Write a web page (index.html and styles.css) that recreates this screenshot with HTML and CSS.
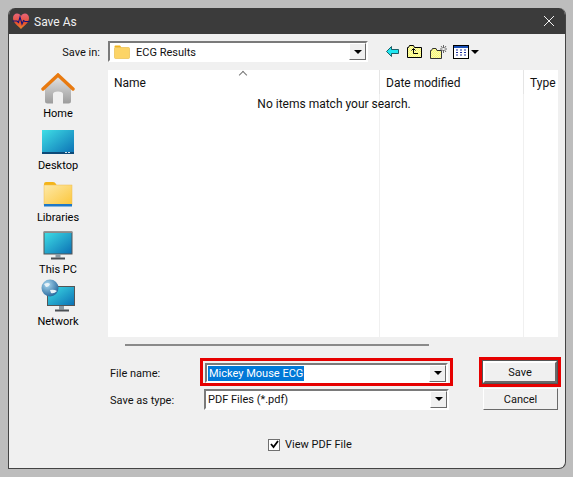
FILE: index.html
```html
<!DOCTYPE html>
<html lang="en">
<head>
    <meta charset="UTF-8">
    <title>Save As</title>
    <link rel="stylesheet" href="styles.css">
</head>
<body>
    <div class="window">
        <div class="titlebar">
            <svg class="app-icon" width="18" height="18" viewBox="0 0 18 18">
                <defs>
                    <linearGradient id="heart" x1="0" y1="0" x2="0" y2="1">
                        <stop offset="0" stop-color="#e8647a"/>
                        <stop offset="0.6" stop-color="#e4502f"/>
                        <stop offset="1" stop-color="#f08a2c"/>
                    </linearGradient>
                </defs>
                <path d="M9 17 C5 13 1 10.500 1 6 C1 3 3 1.500 5 1.500 C7 1.500 8.200 2.500 9 4 C9.800 2.500 11 1.500 13 1.500 C15 1.500 17 3 17 6 C17 10.500 13 13 9 17 Z" fill="url(#heart)"/>
                <path d="M0.500 9 H5 L6.500 10.500 L8 5 L10 12 L11.500 8.500 L13 9.500 H17.500" fill="none" stroke="#14147a" stroke-width="1.100"/>
            </svg>
            <span class="title">Save As</span>
            <svg class="close" width="12" height="12" viewBox="0 0 12 12">
                <path d="M1 1 L11 11 M11 1 L1 11" stroke="#f2f2f2" stroke-width="1"/>
            </svg>
        </div>

        <div class="body">
            <div class="toolbar-row">
                <span class="save-in">Save in:</span>
                <div class="combo combo-folder">
                    <svg width="16" height="14" viewBox="0 0 16 14">
                        <path d="M0.500 1.500 Q0.500 0.500 1.500 0.500 H6 L7.500 2.500 H0.500 Z" fill="#f2b41b"/>
                        <rect x="0.500" y="2.500" width="15" height="11" rx="1" fill="#fcd467" stroke="#e8b840" stroke-width="0.600"/>
                    </svg>
                    <span class="combo-text">ECG Results</span>
                    <span class="combo-btn"><i class="arrow"></i></span>
                </div>
                <div class="tools">
                    <svg width="13" height="11" viewBox="0 0 13 11">
                        <path d="M0.500 5.500 L5.500 0.500 V3.500 H12.500 V7.500 H5.500 V10.500 Z" fill="#1fe6f0" stroke="#003c46" stroke-width="0.800"/>
                    </svg>
                    <svg width="15" height="13" viewBox="0 0 15 13">
                        <defs>
                            <pattern id="dither" width="2" height="2" patternUnits="userSpaceOnUse">
                                <rect width="2" height="2" fill="#ffff66"/>
                                <rect width="1" height="1" fill="#f4f4c0"/>
                                <rect x="1" y="1" width="1" height="1" fill="#f4f4c0"/>
                            </pattern>
                        </defs>
                        <path d="M0.500 12.500 V2.500 H1.500 L2.500 0.500 H6.500 L7.500 2.500 H14.500 V12.500 Z" fill="url(#dither)" stroke="#000"/>
                        <path d="M4.500 5.500 L6.500 3.500 L8.500 5.500 M6.500 4 V8.500 H11" fill="none" stroke="#000"/>
                    </svg>
                    <svg width="17" height="14" viewBox="0 0 17 14">
                        <path d="M0.500 13.500 V5.500 H1.500 L2.500 3.500 H6 L7 5.500 H11.500 V13.500 Z" fill="url(#dither)" stroke="#333"/>
                        <path d="M13.500 0 V3 M13.500 5 V8 M10 4 H12.500 M14.500 4 H17 M11 1 L12.500 3 M16 1 L14.500 3 M11 7 L12.500 5 M16 7 L14.500 5" stroke="#444" stroke-width="0.800"/>
                    </svg>
                    <span class="views">
                        <svg width="16" height="14" viewBox="0 0 16 14">
                            <rect x="0.500" y="0.500" width="15" height="13" fill="#fff" stroke="#000"/>
                            <rect x="1" y="1" width="14" height="2" fill="#1a50b8"/>
                            <path d="M3 5 H5 M7 5 H9 M11 5 H13 M3 7.500 H5 M7 7.500 H9 M11 7.500 H13 M3 10 H5 M7 10 H9 M11 10 H13" stroke="#1c2ea0" stroke-width="1.200"/>
                        </svg>
                        <i class="arrow"></i>
                    </span>
                </div>
            </div>

            <div class="middle">
                <nav class="places">
                    <div class="place">
                        <svg width="34" height="32" viewBox="0 0 34 32">
                            <defs>
                                <linearGradient id="wall" x1="0" y1="0" x2="0" y2="1">
                                    <stop offset="0" stop-color="#e4e4e4"/>
                                    <stop offset="1" stop-color="#9c9c9c"/>
                                </linearGradient>
                            </defs>
                            <path d="M4 15 L17 3 L30 15 V28 Q30 30.500 27.500 30.500 H22 V21 Q22 18.500 17 18.500 Q12 18.500 12 21 V30.500 H6.500 Q4 30.500 4 28 Z" fill="url(#wall)"/>
                            <path d="M2 16 L17 2 L32 16" fill="none" stroke="#e87a10" stroke-width="3.400" stroke-linecap="round"/>
                        </svg>
                        <span>Home</span>
                    </div>
                    <div class="place place-raised">
                        <svg width="34" height="26" viewBox="0 0 34 26">
                            <defs>
                                <linearGradient id="screen" x1="0" y1="0" x2="1" y2="1">
                                    <stop offset="0" stop-color="#3fdfe6"/>
                                    <stop offset="1" stop-color="#0b6fb4"/>
                                </linearGradient>
                            </defs>
                            <rect x="1" y="1" width="32" height="24" fill="url(#screen)"/>
                            <rect x="1" y="23" width="32" height="2" fill="#0d4a78"/>
                            <path d="M24 23.500 H26 M27 23.500 H29" stroke="#d4e4ee"/>
                        </svg>
                        <span>Desktop</span>
                    </div>
                    <div class="place place-raised">
                        <svg width="30" height="26" viewBox="0 0 30 26">
                            <defs>
                                <linearGradient id="lib" x1="0" y1="0" x2="1" y2="1">
                                    <stop offset="0" stop-color="#fde9a8"/>
                                    <stop offset="1" stop-color="#fcc63a"/>
                                </linearGradient>
                            </defs>
                            <path d="M1 3 Q1 1 3 1 H10 Q12 1 13 3 L14 5 H1 Z" fill="#f4b418"/>
                            <rect x="1" y="4" width="28" height="20" fill="url(#lib)" stroke="#eebc50" stroke-width="0.500"/>
                            <rect x="1" y="23" width="28" height="2.500" fill="#1e78c8"/>
                        </svg>
                        <span>Libraries</span>
                    </div>
                    <div class="place">
                        <svg width="30" height="30" viewBox="0 0 30 30">
                            <rect x="1" y="1" width="28" height="22" fill="url(#screen)" stroke="#555" stroke-width="1"/>
                            <rect x="1" y="0.500" width="28" height="1.500" fill="#8a8a8a"/>
                            <rect x="12.500" y="23" width="5" height="3.500" fill="#8a9aa4"/>
                            <rect x="8" y="26.500" width="14" height="2" fill="#4a4f54"/>
                        </svg>
                        <span>This PC</span>
                    </div>
                    <div class="place">
                        <svg width="34" height="34" viewBox="0 0 34 34">
                            <defs>
                                <radialGradient id="globe" cx="0.350" cy="0.300" r="0.800">
                                    <stop offset="0" stop-color="#a8d8f0"/>
                                    <stop offset="1" stop-color="#1d5f96"/>
                                </radialGradient>
                            </defs>
                            <rect x="6.500" y="7.500" width="27" height="19" fill="url(#screen)" stroke="#555"/>
                            <rect x="18" y="27" width="5" height="3.500" fill="#8a9aa4"/>
                            <rect x="14" y="30.500" width="14" height="2" fill="#4a4f54"/>
                            <circle cx="9" cy="9" r="8.500" fill="url(#globe)"/>
                            <path d="M3 5 Q7 3 9 5 Q8 8 5 8 Z M9 11 Q13 10 16 12 Q13 15 10 14 Z" fill="#e8f2f8"/>
                        </svg>
                        <span>Network</span>
                    </div>
                </nav>

                <div class="list">
                    <div class="list-head">
                        <span class="col col-name">Name<i class="sort"></i></span>
                        <span class="col col-date">Date modified</span>
                        <span class="col col-type">Type</span>
                    </div>
                    <div class="list-body">
                        <span class="col-rule col-rule-a"></span>
                        <span class="col-rule col-rule-b"></span>
                        <p class="empty">No items match your search.</p>
                    </div>
                </div>
            </div>

            <div class="scroll-line"></div>

            <div class="form">
                <label class="form-label">File name:</label>
                <div class="mark mark-input">
                    <div class="combo">
                        <span class="combo-text"><span class="selected">Mickey Mouse ECG</span></span>
                        <span class="combo-btn"><i class="arrow"></i></span>
                    </div>
                </div>
                <div class="mark mark-button">
                    <button class="btn btn-default" type="button"><span>Save</span></button>
                </div>

                <label class="form-label">Save as type:</label>
                <div class="combo combo-type">
                    <span class="combo-text">PDF Files (*.pdf)</span>
                    <span class="combo-btn"><i class="arrow"></i></span>
                </div>
                <button class="btn btn-cancel" type="button">Cancel</button>
            </div>

            <div class="check-row">
                <span class="checkbox">
                    <svg width="9" height="9" viewBox="0 0 9 9">
                        <path d="M1 4 L3.500 7 L8 1" fill="none" stroke="#000" stroke-width="1.800"/>
                    </svg>
                </span>
                <span>View PDF File</span>
            </div>
        </div>
    </div>
</body>
</html>
```

FILE: styles.css
```css
* {
    box-sizing: border-box;
}
body {
    margin: 0;
    padding: 8px;
    width: 573px;
    height: 477px;
    overflow: hidden;
    background: #bdbdbd;
    font-family: Roboto, "Noto Sans", sans-serif;
    font-size: 11px;
    color: #111;
}
.window {
    width: 558px;
    height: 461px;
    background: #f0f0f0;
    border: 1px solid #444;
    border-top: none;
    border-radius: 7px 7px 7px 0;
    overflow: hidden;
}
.titlebar {
    height: 26px;
    background: #3b3b3b;
    display: flex;
    align-items: center;
    padding: 0 10px 0 3px;
    color: #f0f0f0;
}
.app-icon {
    margin-right: 4px;
}
.title {
    font-size: 12px;
    padding-top: 2px;
    flex: 1;
}
.body {
    padding: 7px 0 0 0;
}
.toolbar-row {
    display: flex;
    align-items: center;
    height: 21px;
}
.save-in {
    width: 91px;
    padding-top: 1px;
    text-align: right;
    margin-right: 8px;
}
.combo {
    display: flex;
    align-items: center;
    height: 21px;
    background: #fff;
    border: 2px solid;
    border-color: #7a7a7a #fff #fff #7a7a7a;
}
.combo-folder {
    width: 260px;
    padding-left: 4px;
}
.combo-folder svg {
    margin-right: 5px;
}
.combo-text {
    flex: 1;
    padding: 1px 0 0 1px;
}
.combo-btn {
    width: 17px;
    height: 17px;
    background: #f0f0f0;
    border: 1px solid;
    border-color: #fff #6a6a6a #6a6a6a #fff;
    display: flex;
    align-items: center;
    justify-content: center;
}
.arrow {
    display: block;
    width: 0;
    height: 0;
    border-left: 4px solid transparent;
    border-right: 4px solid transparent;
    border-top: 4px solid #000;
}
.tools {
    display: flex;
    align-items: center;
    gap: 8px;
    margin-left: 18px;
}
.views {
    display: flex;
    align-items: center;
    gap: 2px;
    margin-left: -2px;
}
.middle {
    display: flex;
    margin-top: 8px;
}
.places {
    width: 98px;
    margin-top: -3px;
    padding-top: 3px;
    margin-right: 1px;
}
.place {
    height: 52px;
    display: flex;
    flex-direction: column;
    align-items: center;
    justify-content: flex-end;
    color: #000;
}
.place svg {
    margin: auto 0 0;
}
.place-raised svg {
    margin-bottom: 2px;
}
.place span {
    line-height: 16px;
    margin-top: 1px;
}
.list {
    width: 450px;
    height: 267px;
    background: #fff;
    display: flex;
    flex-direction: column;
    font-size: 12px;
}
.list-head {
    display: flex;
    height: 24px;
    align-items: center;
}
.col {
    padding: 2px 0 0 6px;
    height: 100%;
    display: flex;
    align-items: center;
    position: relative;
}
.col-name {
    width: 271px;
}
.col-date {
    width: 144px;
    border-left: 1px solid #e5e5e5;
}
.col-type {
    flex: 1;
    border-left: 1px solid #e5e5e5;
}
.sort {
    position: absolute;
    left: 132px;
    top: 2px;
    width: 6px;
    height: 6px;
    border-left: 1px solid #777;
    border-top: 1px solid #777;
    transform: rotate(45deg);
}
.list-body {
    flex: 1;
    position: relative;
    text-align: center;
}
.col-rule {
    position: absolute;
    top: 0;
    bottom: 0;
    width: 1px;
    background: #f0f0f0;
}
.col-rule-a {
    left: 271px;
}
.col-rule-b {
    left: 415px;
}
.empty {
    margin: 2px 0 0;
    line-height: 16px;
    position: relative;
    width: 452px;
}
.scroll-line {
    width: 304px;
    height: 2px;
    background: #8a8a8a;
    margin: 7px 0 0 116px;
}
.form {
    display: grid;
    grid-template-columns: 191px 253px 82px;
    row-gap: 1px;
    margin-top: 11px;
    align-items: center;
}
.form-label {
    padding: 3px 0 0 101px;
}
.mark {
    border: 3px solid #e60000;
}
.mark-input {
    padding: 2px;
    height: 28px;
}
.mark-input .combo {
    height: 20px;
}
.mark-input .combo-text {
    padding: 0 0 0 1px;
}
.selected {
    display: inline-block;
    line-height: 15px;
    padding: 0 1px;
    background: #0078d7;
    color: #fff;
}
.mark-button {
    margin-left: 26px;
    width: 82px;
    height: 30px;
    padding: 1px;
}
.btn {
    font-family: inherit;
    font-size: 11px;
    color: #111;
    background: #f0f0f0;
    border: 1px solid;
    border-color: #fff #6a6a6a #6a6a6a #fff;
    padding: 0;
}
.btn-default {
    width: 74px;
    height: 22px;
    display: block;
    margin: 0 auto;
    padding-top: 1px;
    border: 2px solid;
    border-color: #fff #6a6a6a #6a6a6a #fff;
    outline: 1px solid #555;
}
.btn-cancel {
    width: 75px;
    height: 22px;
    margin-left: 30px;
}
.combo-type {
    width: 245px;
    margin-left: 4px;
}
.combo-type .combo-text {
    padding: 1px 0 0 2px;
}
.check-row {
    display: flex;
    align-items: center;
    gap: 5px;
    margin: 28px 0 0 259px;
}
.checkbox {
    width: 12px;
    height: 12px;
    background: #fff;
    border: 1px solid #707070;
    display: flex;
    align-items: center;
    justify-content: center;
}
```
